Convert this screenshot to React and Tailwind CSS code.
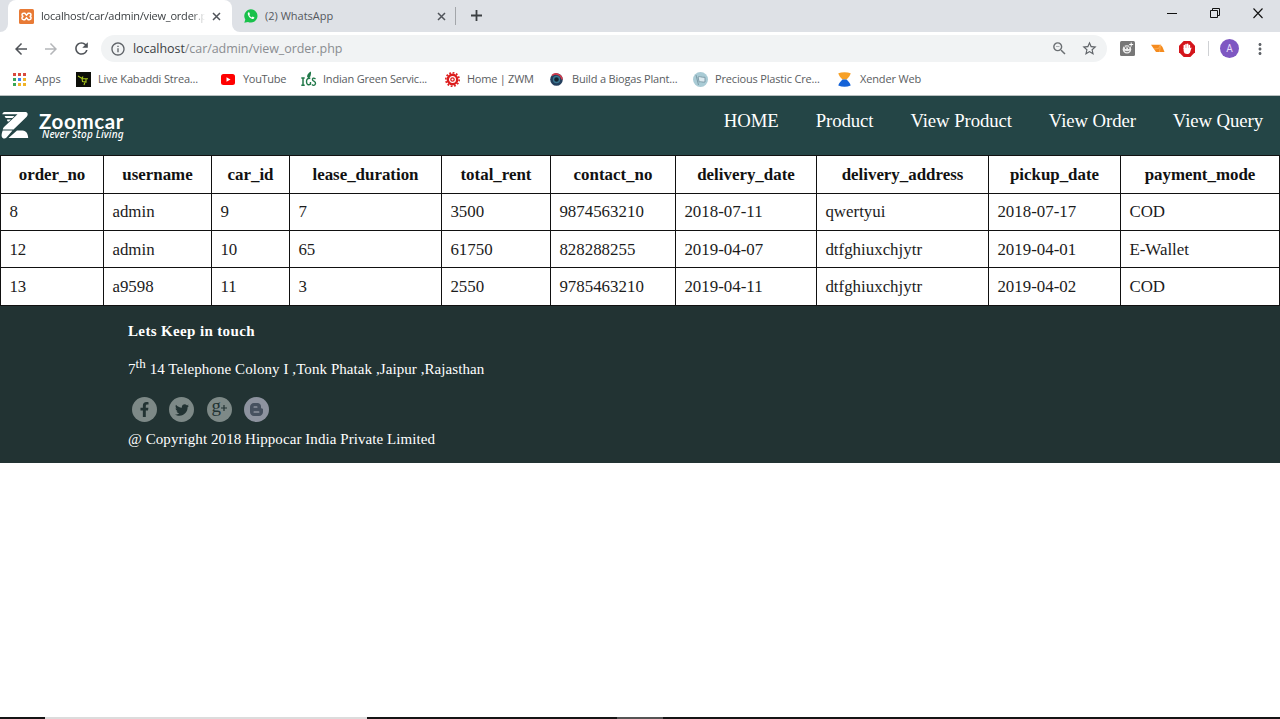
import React from "react";
import { FaFacebookF, FaTwitter, FaBloggerB } from "react-icons/fa";
import { MdArrowBack, MdArrowForward, MdRefresh, MdStarBorder, MdMoreVert, MdInfoOutline, MdZoomOut } from "react-icons/md";

const CrossIcon = () => (
  <svg width="9" height="9" viewBox="0 0 9 9" className="shrink-0" stroke="#50545a" strokeWidth="1.5">
    <path d="M1 1l7 7M8 1L1 8" />
  </svg>
);

function TabStrip() {
  return (
    <div className="flex h-8 bg-[#dee1e6]">
      <div className="flex h-8 w-2 shrink-0 bg-white">
        <div className="h-8 w-2 rounded-br-lg bg-[#dee1e6]" />
      </div>
      <div className="flex h-8 w-[224px] shrink-0 items-center rounded-t-lg bg-white pl-[11px]">
        <svg width="15" height="15" viewBox="0 0 15 15" className="shrink-0">
          <rect width="15" height="15" rx="1.5" fill="#e87a35" />
          <path d="M4.6 4.2h1.2l1.7 2 1.7-2h1.2a1.6 1.6 0 0 1 0 3.2 1.7 1.7 0 0 1 0 3.4H9.2l-1.7-2-1.7 2H4.6a1.7 1.7 0 0 1 0-3.4 1.6 1.6 0 0 1 0-3.2z" fill="none" stroke="#fff" strokeWidth="1.5" />
        </svg>
        <div className="ml-[7px] w-[164px] overflow-hidden whitespace-nowrap text-[11px] tracking-[-0.2px] text-[#3c4043] [mask-image:linear-gradient(to_right,black_92%,transparent)]">
          localhost/car/admin/view_order.php
        </div>
        <div className="ml-[7px] flex"><CrossIcon /></div>
      </div>
      <div className="flex h-8 w-2 shrink-0 bg-white">
        <div className="h-8 w-2 rounded-bl-lg bg-[#dee1e6]" />
      </div>
      <div className="flex h-8 w-[217px] items-center pl-[4px]">
        <svg width="14" height="14" viewBox="0 0 14 14">
          <path d="M.3 13.8l1-3.3A6.6 6.6 0 1 1 4 12.9z" fill="#19c14b" />
          <path d="M4.7 3.3c-.7.3-1.1 1.1-.9 1.900.5 2.200 2.300 4 4.500 4.800.8.3 1.700-.1 2-.9l.1-.7-1.800-.9-.8.9c-1.200-.5-2-1.300-2.500-2.400l.7-.8-.7-1.800z" fill="#fff" />
        </svg>
        <div className="ml-[7px] w-[172px] whitespace-nowrap text-[11px] text-[#54585d]">(2) WhatsApp</div>
        <CrossIcon />
        <div className="ml-[9px] h-[18px] w-px bg-[#a3a6aa]" />
      </div>
      <svg width="11" height="11" viewBox="0 0 11 11" className="ml-[14px] mt-[10px]" stroke="#3c4043" strokeWidth="1.8">
        <path d="M5.5 0v11M0 5.5h11" />
      </svg>
      <div className="ml-auto flex h-8 gap-[33px] pr-[17px] pt-[8px]">
        <svg width="10" height="11" viewBox="0 0 10 11" stroke="#111"><path d="M0 5.5h10" /></svg>
        <svg width="10" height="11" viewBox="0 0 10 11" fill="none" stroke="#111"><path d="M.5 2.5h7v7h-7zM2.5 2.500V.5h7v7h-2" /></svg>
        <svg width="10" height="11" viewBox="0 0 10 11" stroke="#111" strokeWidth="1.1"><path d="M.5.5l9 9.500M9.500.5l-9 9.500" /></svg>
      </div>
    </div>
  );
}

function Toolbar() {
  return (
    <div className="flex h-[33px] items-center pl-[12px]">
      <MdArrowBack size={18} color="#4f5358" />
      <MdArrowForward size={18} color="#b4b6b9" className="ml-[12px]" />
      <MdRefresh size={19} color="#4f5358" className="ml-[12px]" />
      <div className="ml-[10px] flex h-[27px] w-[1006px] items-center rounded-full bg-[#f1f3f4] pl-[9px]">
        <MdInfoOutline size={16} color="#5f6368" />
        <div className="ml-[7px] pt-px text-[12.5px] leading-[26px] tracking-[-0.06px] text-[#8a8d91]">
          <span className="text-[#3c4043]">localhost</span>/car/admin/view_order.php
        </div>
        <MdZoomOut size={17} color="#6b6f73" className="ml-auto" />
        <MdStarBorder size={17} color="#5f6368" className="ml-[13px] mr-[9px]" />
      </div>
      <svg width="15" height="15" viewBox="0 0 15 15" className="ml-[13px]">
        <rect width="15" height="15" rx="1.5" fill="#777" />
        <path d="M7 4.200c2.600 0 4.200 1.500 4.200 4S9.600 12.500 7 12.500 2.700 10.700 2.700 8.200 4.400 4.200 7 4.200z" fill="#eee" />
        <path d="M5 7.500h1.300M8 7.500h1.300M4.800 10c1.500 1 3 1 4.500 0M4 5.500l2 1M7 5v2M10 5.500l-2 1" stroke="#777" fill="none" />
        <path d="M11.200 1.500v4M9.200 3.500h4" stroke="#fff" />
      </svg>
      <svg width="15" height="9" viewBox="0 0 15 9" className="ml-[16px]">
        <path d="M0 .8h9.500L11.500 3 13.500 8H5z" fill="#f58b1e" />
        <path d="M3 5l4.500-.5L9.500.8 8.500 8" stroke="#ffb35d" fill="none" strokeWidth=".8" />
      </svg>
      <svg width="16" height="16" viewBox="0 0 16 16" className="ml-[13px]">
        <path d="M4.700 0h6.600L16 4.700v6.600L11.300 16H4.700L0 11.300V4.700z" fill="#d4151b" />
        <path d="M5.300 7.500V4.600M7 7V3.500M8.700 7V3.300M10.400 8V4.400" stroke="#fff" strokeWidth="1.500" strokeLinecap="round" />
        <path d="M4.600 7h6.600l1-.6c.5.3.2.8 0 1.300l-1.100 3.500c-.5 1.200-1.300 1.800-2.800 1.800-2.500 0-3.500-1.100-3.700-3.500z" fill="#fff" />
      </svg>
      <div className="ml-[13px] h-[15px] w-px bg-[#cfd1d4]" />
      <div className="ml-[11px] flex h-[19px] w-[19px] items-center justify-center rounded-full bg-[#7e57c2] font-[Roboto] text-[10px] text-[#e8defa]">A</div>
      <MdMoreVert size={18} color="#5f6368" className="ml-[12px]" />
    </div>
  );
}

const appColors = ["#d94a3d", "#d94a3d", "#d94a3d", "#3aa757", "#3b83f0", "#f0b428", "#3aa757", "#f0b428", "#f0b428"];
const icons = {
  apps: (
    <svg width="13" height="13" viewBox="0 0 13 13">
      {appColors.map((c, i) => <rect key={i} x={(i % 3) * 5} y={Math.floor(i / 3) * 5} width="3" height="3" fill={c} />)}
    </svg>
  ),
  kabaddi: (
    <svg width="15" height="15" viewBox="0 0 15 15">
      <rect width="15" height="15" fill="#0d0e08" />
      <path d="M2 4l4 2.500 1-2M6 6.500l6 .3M6 6.500l.5 3 3.500.5V7M9 10l-1 3" stroke="#a9c91c" fill="none" strokeWidth="1.100" />
    </svg>
  ),
  youtube: (
    <svg width="14" height="11" viewBox="0 0 14 11">
      <rect width="14" height="11" rx="2.500" fill="#f00" /><path d="M5.500 3.200v4.600l4-2.300z" fill="#fff" />
    </svg>
  ),
  igs: (
    <svg width="16" height="16" viewBox="0 0 16 16" fill="none" stroke="#22794a">
      <path d="M.3 7h3.400M2 7v7M.3 14.300h3.400" strokeWidth="1.500" />
      <path d="M9.300 7.500c-2.500-.8-4 1-3.800 3.500s2 3.500 4 2.200V11M14.500 7.800c-2-1.300-3.300-.5-3 1s3.500 1.500 3 3.800-2.500 2-3.500 1" strokeWidth="1.400" />
      <path d="M6 5.500C6.300 3 8 1.500 10 .5c.3 3-.5 6-2.500 7z" fill="#22794a" stroke="none" />
    </svg>
  ),
  gear: (
    <svg width="15" height="15" viewBox="0 0 15 15" fill="none" stroke="#dc1c1c">
      <circle cx="7.500" cy="7.500" r="6.700" strokeWidth="1.600" strokeDasharray="1.800 1.700" />
      <circle cx="7.500" cy="7.500" r="4.700" strokeWidth="2.400" /><circle cx="7.500" cy="7.500" r="1.700" strokeWidth="1.300" />
    </svg>
  ),
  biogas: (
    <svg width="13" height="13" viewBox="0 0 13 13">
      <circle cx="6.500" cy="6.500" r="6.300" fill="#243f5d" />
      <path d="M2 2.500a6 6 0 0 1 10 4" stroke="#d83b4c" strokeWidth="1.600" fill="none" />
      <circle cx="6.500" cy="6.500" r="3" fill="#132431" stroke="#3b7892" strokeWidth="1.400" />
    </svg>
  ),
  plastic: (
    <svg width="15" height="15" viewBox="0 0 15 15">
      <circle cx="7.500" cy="7.500" r="7.500" fill="#a9cbd5" />
      <path d="M3 3l2.500 10M5 5c2-1 3 .5 7 .3V10c-3 .5-4-.8-5.800 0z" fill="#dceaf0" stroke="#7896a3" strokeWidth=".9" />
    </svg>
  ),
  xender: (
    <svg width="13" height="15" viewBox="0 0 13 15">
      <path d="M.3 1.200C4 0 9 0 12.700 1.200 12 4 10 6 8.500 7.500h-4C3 6 1 4 .3 1.200z" fill="#f7a128" />
      <path d="M4.500 7.500h4c1.700 1.500 3.700 3.500 4.200 6.100-4 1.600-8.400 1.600-12.400 0C.8 11 3 9 4.500 7.500z" fill="#1563d8" />
    </svg>
  ),
};

function Bookmark({ icon, label, className, text = "" }) {
  return (
    <div className={"flex shrink-0 items-center whitespace-nowrap " + className}>
      <div className="flex w-[22px] shrink-0 items-center">{icons[icon]}</div>
      <div className={text}>{label}</div>
    </div>
  );
}

function Bookmarks() {
  return (
    <div className="flex h-[30px] pb-[2px] pl-[13px] text-[11px] text-[#5a5d61]">
      <Bookmark icon="apps" label="Apps" className="w-[63px]" />
      <Bookmark icon="kabaddi" label="Live Kabaddi Strea..." className="w-[145px]" text="tracking-[-0.15px]" />
      <Bookmark icon="youtube" label="YouTube" className="w-[80px]" text="tracking-[-0.3px]" />
      <Bookmark icon="igs" label="Indian Green Servic..." className="w-[144px]" text="tracking-[-0.2px]" />
      <Bookmark icon="gear" label="Home | ZWM" className="w-[105px]" text="tracking-[-0.25px]" />
      <Bookmark icon="biogas" label="Build a Biogas Plant..." className="w-[143px]" text="tracking-[-0.18px]" />
      <Bookmark icon="plastic" label="Precious Plastic Cre..." className="w-[145px]" text="tracking-[-0.17px]" />
      <Bookmark icon="xender" label="Xender Web" className="w-[100px]" text="tracking-[-0.15px]" />
    </div>
  );
}

function SiteHeader() {
  return (
    <header className="flex h-[59px] bg-[#244546] text-white">
      <svg width="28" height="29" viewBox="0 0 28 29" fill="#fff" className="ml-px mt-[15px]">
        <path d="M3.500 1H25c2 .8 2.300 3 .7 4.700L12.500 18.500H1.800c0-1 .4-1.800 1.200-2.600L16.500 3.300H1.300C1.500 2 2.300 1.200 3.500 1z" />
        <path d="M3.800 5h9.700l-2 1.900H5.300c-1 0-1.600-.9-1.500-1.900zM6.200 8.500h3.800l-2.200 2H7c-.7 0-1-.9-.8-2z" />
        <path d="M1.700 19.500h9.800L5.300 26.800c-1.500 1.400-4 .7-4.500-1-.5-1.500 0-4 .9-6.300zM16 19.500h5.500c4 .3 5.500 3.500 5.700 7.500H7.500z" />
      </svg>
      <div className="ml-[10px] mt-[16px] flex flex-col">
        <span className="h-[16px] whitespace-nowrap font-[Lato] text-[20.500px] font-bold leading-[18px] tracking-[0.62px]">Zoomcar</span>
        <span className="ml-[3px] whitespace-nowrap font-['Noto_Sans'] text-[10px] font-medium italic leading-[12px] tracking-[0.2px]">Never Stop Living</span>
      </div>
      <nav className="ml-auto flex gap-[37px] pr-[17px] pt-[14px] font-['Liberation_Serif',serif] text-[18.750px] leading-[22px] tracking-[-0.09px]">
        {["HOME", "Product", "View Product", "View Order", "View Query"].map((label) => (
          <a key={label} className="whitespace-nowrap">{label}</a>
        ))}
      </nav>
    </header>
  );
}

const columns = ["order_no", "username", "car_id", "lease_duration", "total_rent", "contact_no", "delivery_date", "delivery_address", "pickup_date", "payment_mode"];
const widths = [103, 108, 78, 152, 109, 125, 141, 172, 132, 159];
const orders = [
  ["8", "admin", "9", "7", "3500", "9874563210", "2018-07-11", "qwertyui", "2018-07-17", "COD"],
  ["12", "admin", "10", "65", "61750", "828288255", "2019-04-07", "dtfghiuxchjytr", "2019-04-01", "E-Wallet"],
  ["13", "a9598", "11", "3", "2550", "9785463210", "2019-04-11", "dtfghiuxchjytr", "2019-04-02", "COD"],
];
const rowHeights = ["h-[37px]", "h-[37px]", "h-[38px]"];
const cellPads = ["pt-0", "pt-px", "pt-0"];

function OrderTable() {
  return (
    <table className="w-full table-fixed border-separate border-spacing-0 border-l border-t border-[#111] font-['Liberation_Serif',serif] text-[16.9px] leading-[20px] text-[#1c1c1c]">
      <colgroup>{widths.map((w, i) => <col key={i} style={{ width: w }} />)}</colgroup>
      <thead>
        <tr className="h-[38px]">
          {columns.map((c) => <th key={c} className="border-b border-r border-[#111] p-0 text-center font-bold text-[#111]">{c}</th>)}
        </tr>
      </thead>
      <tbody>
        {orders.map((row, r) => (
          <tr key={r} className={rowHeights[r]}>
            {row.map((v, i) => <td key={i} className={"border-b border-r border-[#111] pb-0 pl-[8.400px] pr-0 " + cellPads[r]}>{v}</td>)}
          </tr>
        ))}
      </tbody>
    </table>
  );
}

function SocialCircle({ children, className = "bg-[#7d8987] text-[#223333]" }) {
  return <div className={"flex h-[25px] w-[25px] items-center justify-center rounded-full " + className}>{children}</div>;
}

function SiteFooter() {
  return (
    <footer className="h-[157px] bg-[#223333] pl-32 pt-[16px] font-['Liberation_Serif',serif] text-[15px] leading-[18px] tracking-[0.07px] text-white">
      <div className="font-bold tracking-[0.36px]">Lets Keep in touch</div>
      <div className="mt-[20px] h-[18px] whitespace-nowrap">7<sup className="top-[-6px] text-[13px]">th</sup> 14 Telephone Colony I ,Tonk Phatak ,Jaipur ,Rajasthan</div>
      <div className="mt-[19px] flex gap-[12.400px] pl-[4px]">
        <SocialCircle><FaFacebookF size={15} /></SocialCircle>
        <SocialCircle><FaTwitter size={14} /></SocialCircle>
        <SocialCircle>
          <span className="-mt-[7px] text-[19px] leading-[18px]">g</span>
          <svg width="6" height="6" viewBox="0 0 6 6" className="-mt-[3px]" stroke="#223333" strokeWidth="1.200"><path d="M3 0v6M0 3h6" /></svg>
        </SocialCircle>
        <SocialCircle className="bg-[#8d939f] text-[#46515f]">
          <svg width="13" height="13" viewBox="0 0 13 13">
            <path d="M4 0h3.500C9.500 0 11 1.500 11 3.500v1c0 .6.300.9 1 .9.600 0 1 .3 1 .8V9c0 2.200-1.700 4-4 4H4c-2.300 0-4-1.800-4-4V4c0-2.300 1.700-4 4-4z" fill="#46515f" />
            <path d="M4.300 4h2.400M4.300 9h4.300" stroke="#8d939f" strokeWidth="1.700" strokeLinecap="round" />
          </svg>
        </SocialCircle>
      </div>
      <div className="mt-[8px]">@ Copyright 2018 Hippocar India Private Limited</div>
    </footer>
  );
}

export default function App() {
  return (
    <div className="flex h-[719px] w-[1280px] flex-col overflow-hidden bg-white font-['Open_Sans',sans-serif]">
      <TabStrip />
      <Toolbar />
      <Bookmarks />
      <div className="h-px shrink-0 bg-[#b9c0c0]" />
      <div className="h-px shrink-0 -mb-px bg-[#5c7575]" />
      <SiteHeader />
      <OrderTable />
      <SiteFooter />
      <div className="mt-auto flex h-[2px] shrink-0 bg-[#151515]">
        <div className="ml-[45px] h-[2px] w-[322px] bg-[#dcdcdc]" />
        <div className="ml-[250px] h-[2px] w-[46px] bg-[#555]" />
      </div>
    </div>
  );
}
